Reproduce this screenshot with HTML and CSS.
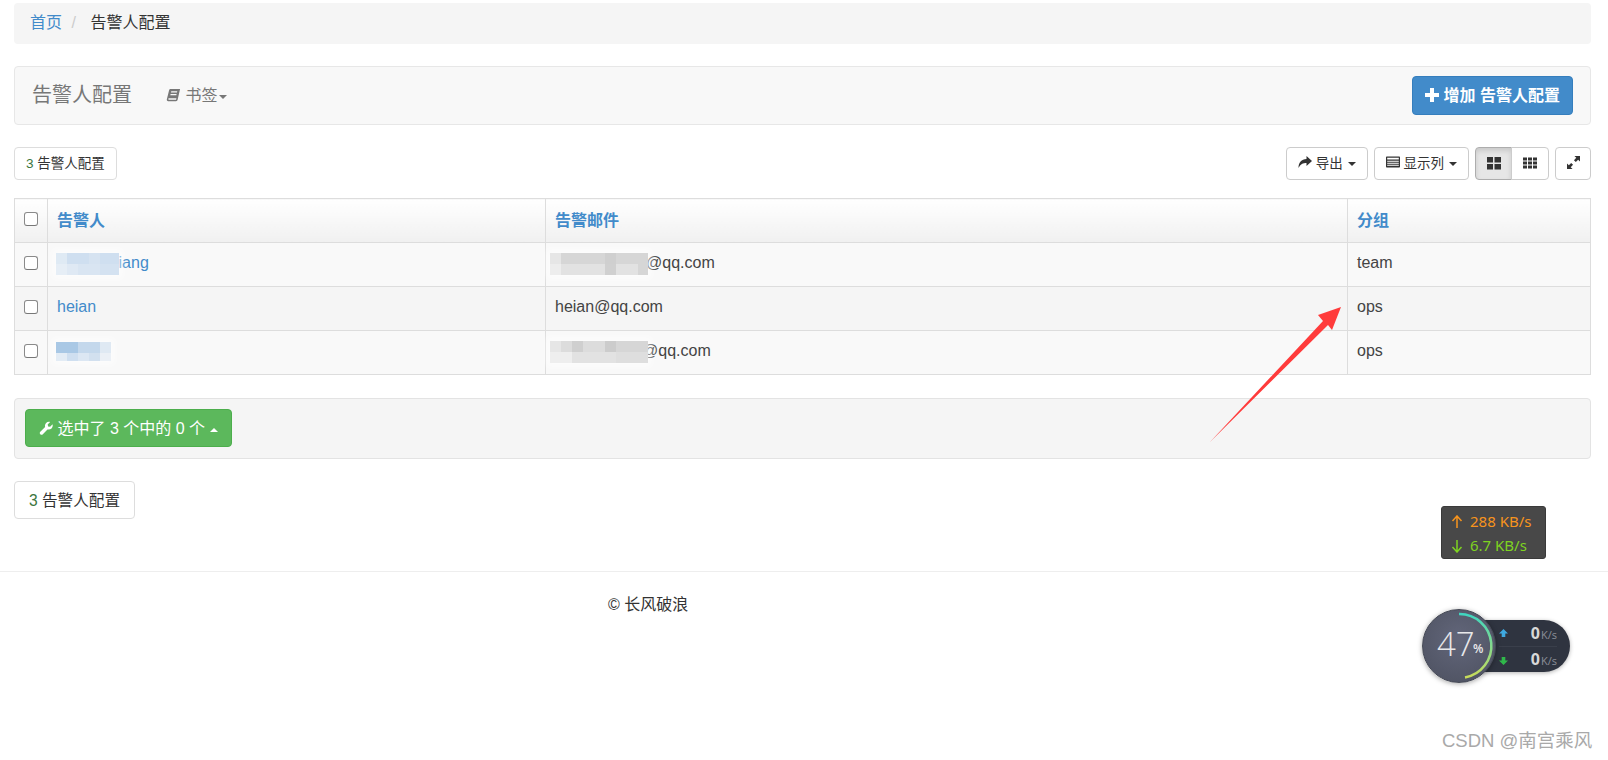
FILE: index.html
```html
<!DOCTYPE html>
<html lang="zh-CN">

<head>
    <meta charset="UTF-8">
    <title>告警人配置</title>
    <link rel="stylesheet" href="styles.css">
</head>

<body>
    <div class="page">
        <!-- Breadcrumb -->
        <div class="breadcrumb">
            <a href="#">首页</a>
            <span class="crumb-sep">/</span>
            <span>告警人配置</span>
        </div>

        <!-- Title bar -->
        <div class="navbar">
            <span class="navbar-title">告警人配置</span>
            <span class="bookmark">
                <svg class="icon icon-book" viewBox="0 0 16 16"><path d="M5 1h10l-2.600 11.500c-.2.800-.8 1.500-1.800 1.500H2.400C1.200 14 .6 13.200.9 12.100L3.300 2.300C3.500 1.500 4.100 1 5 1zm.6 2.400-.3 1.300h6.400l.3-1.300zm-.7 3-.3 1.200h6.400l.3-1.200zM3.300 11c-.6 0-1 .4-1 .8s.4.800 1 .8h7.400l.4-1.600z" /></svg>
                书签<span class="caret"></span>
            </span>
            <button type="button" class="btn-add">
                <svg class="icon icon-plus" viewBox="0 0 14 14"><path d="M5 0h4v5h5v4H9v5H5V9H0V5h5z" /></svg>
                增加 告警人配置
            </button>
        </div>

        <!-- Toolbar -->
        <div class="toolbar">
            <span class="count-box"><span class="count">3</span> 告警人配置</span>
            <div class="toolbar-right">
                <button type="button" class="tool-btn tool-export">
                    <svg class="icon" viewBox="0 0 14 14"><path d="M8.500 1 14 6 8.500 11V8C5 8 2.500 9 .5 13 .5 7.500 3.500 4 8.500 4z" /></svg>
                    导出<span class="caret caret-dark"></span>
                </button>
                <button type="button" class="tool-btn tool-columns">
                    <svg class="icon" viewBox="0 0 14 14"><path d="M1 1.500h12c.6 0 1 .4 1 1v9c0 .6-.4 1-1 1H1c-.6 0-1-.4-1-1v-9c0-.6.4-1 1-1zm.2 1.300v1.800h11.600V2.800zm0 3v1h11.600v-1zm0 2v1h11.600v-1zm0 2v1h11.600v-1z" fill-rule="evenodd" /></svg>
                    显示列<span class="caret caret-dark"></span>
                </button>
                <div class="btn-group">
                    <button type="button" class="tool-btn view-btn active">
                        <svg class="icon" viewBox="0 0 14 14"><path d="M0 1h6v5.500H0zM7.500 1H14v5.500H7.500zM0 8h6v5.500H0zM7.500 8H14v5.500H7.500z" /></svg>
                    </button>
                    <button type="button" class="tool-btn view-btn">
                        <svg class="icon" viewBox="0 0 14 14"><path d="M0 1.500h4v3H0zM5 1.500h4v3H5zM10 1.500h4v3h-4zM0 5.500h4v3H0zM5 5.500h4v3H5zM10 5.500h4v3h-4zM0 9.500h4v3H0zM5 9.500h4v3H5zM10 9.500h4v3h-4z" /></svg>
                    </button>
                </div>
                <button type="button" class="tool-btn tool-full">
                    <svg class="icon" viewBox="0 0 14 14"><path d="M8 0h6v6l-2-2-2.500 2.500L7.500 4.500 10 2zM6.500 9.500 4 12l2 2H0V8l2 2 2.500-2.500z" /></svg>
                </button>
            </div>
        </div>

        <!-- Alert contacts -->
        <table class="data-table">
            <thead>
                <tr>
                    <th class="col-check"><input type="checkbox"></th>
                    <th class="col-name"><a href="#">告警人</a></th>
                    <th class="col-mail"><a href="#">告警邮件</a></th>
                    <th><a href="#">分组</a></th>
                </tr>
            </thead>
            <tbody>
                <tr>
                    <td class="col-check"><input type="checkbox"></td>
                    <td><a href="#"><span class="mosaic mosaic-name-a"></span>liang</a></td>
                    <td><span class="mosaic mosaic-mail-a"></span>@qq.com</td>
                    <td>team</td>
                </tr>
                <tr>
                    <td class="col-check"><input type="checkbox"></td>
                    <td><a href="#">heian</a></td>
                    <td>heian@qq.com</td>
                    <td>ops</td>
                </tr>
                <tr>
                    <td class="col-check"><input type="checkbox"></td>
                    <td><a href="#"><span class="mosaic mosaic-name-b"></span></a></td>
                    <td><span class="mosaic mosaic-mail-b"></span>@qq.com</td>
                    <td>ops</td>
                </tr>
            </tbody>
        </table>

        <!-- Bulk actions -->
        <div class="bulk-bar">
            <button type="button" class="btn-bulk">
                <svg class="icon" viewBox="0 0 16 16"><path d="M15.500 3.800c.5 1.800 0 3.500-1.200 4.700-1.300 1.200-3 1.600-4.600 1.100l-5.300 5.500c-.8.800-2.100.8-2.900 0s-.8-2.100 0-2.900l5.500-5.300C6.500 5.300 6.900 3.600 8.100 2.300 9.300 1.100 11 .6 12.700 1.100L9.900 3.900l.5 2.300 2.300.5z" /></svg>
                选中了 3 个中的 0 个<span class="caret caret-up"></span>
            </button>
        </div>

        <span class="count-box count-box-large"><span class="count">3</span> 告警人配置</span>
    </div>

    <hr class="footer-line">
    <div class="footer">© 长风破浪</div>

    <!-- Things lying over the page: annotation arrow, speed widgets, watermark -->
    <svg class="arrow" viewBox="0 0 1608 760"><polygon points="1210,442 1323,321 1318,315 1341,307 1332,330 1328,325" /></svg>

    <div class="speed-box">
        <div class="speed-up">
            <svg class="speed-arrow" viewBox="0 0 12 14"><path d="M6 1v12M1.500 6 6 1l4.500 5" /></svg>288 KB/s
        </div>
        <div class="speed-down">
            <svg class="speed-arrow" viewBox="0 0 12 14"><path d="M6 13V1M1.500 8 6 13l4.500-5" /></svg>6.7 KB/s
        </div>
    </div>

    <div class="net-widget">
        <div class="net-pill">
            <div class="net-row">
                <svg class="net-icon net-up" viewBox="0 0 10 10"><path d="M5 0l5 5H7v4H3V5H0z" /></svg>
                <span class="net-val">0<small>K/s</small></span>
            </div>
            <div class="net-row">
                <svg class="net-icon net-down" viewBox="0 0 10 10"><path d="M5 10l5-5H7V1H3v4H0z" /></svg>
                <span class="net-val">0<small>K/s</small></span>
            </div>
        </div>
        <div class="net-dial">
            <svg class="net-arc" viewBox="0 0 74 74">
                <defs>
                    <linearGradient id="arc-grad" x1="0" y1="0" x2="0" y2="1">
                        <stop offset="0" stop-color="#3fd6c0" />
                        <stop offset="1" stop-color="#c8dc5a" />
                    </linearGradient>
                </defs>
                <path d="M37 5A32 32 0 0 1 43 68.500" fill="none" stroke="url(#arc-grad)" stroke-width="2.500" />
            </svg>
            <span class="net-num">47</span><span class="net-pct">%</span>
        </div>
    </div>

    <div class="watermark">CSDN @南宫乘风</div>
</body>

</html>
```

FILE: styles.css
```css
* {
    box-sizing: border-box;
}

html, body {
    height: 760px;
}

body {
    margin: 0;
    overflow: hidden;
    position: relative;
    background-color: #fff;
    color: #333;
    font-family: "Liberation Sans", "Noto Sans CJK SC", sans-serif;
    font-size: 16px;
    line-height: 23px;
}

a {
    color: #428bca;
    text-decoration: none;
}

.page {
    padding: 3px 17px 0 14px;
}

.icon {
    width: 14px;
    height: 14px;
    fill: currentColor;
    vertical-align: -1px;
}

.caret {
    display: inline-block;
    width: 0;
    height: 0;
    margin-left: 2px;
    vertical-align: 2px;
    border-top: 4px solid #777;
    border-left: 4px solid transparent;
    border-right: 4px solid transparent;
}

.caret-dark {
    margin-left: 5px;
    border-top-color: #333;
}

.caret-up {
    margin-left: 5px;
    border-top: 0;
    border-bottom: 4px solid #fff;
}

/* breadcrumb */
.breadcrumb {
    height: 41px;
    margin-bottom: 22px;
    padding: 8px 16px 0;
    background-color: #f5f5f5;
    border-radius: 4px;
}

.crumb-sep {
    margin: 0 10px 0 5px;
    color: #ccc;
}

/* title bar */
.navbar {
    display: flex;
    align-items: center;
    height: 59px;
    margin-bottom: 22px;
    padding: 0 17px;
    background-color: #f8f8f8;
    border: 1px solid #e7e7e7;
    border-radius: 4px;
}

.navbar-title {
    color: #777;
    font-size: 20px;
}

.bookmark {
    margin-left: 34px;
    color: #777;
}

.icon-book {
    width: 15px;
    height: 15px;
    vertical-align: -2px;
}

.btn-add {
    margin-left: auto;
    height: 39px;
    padding: 0 12px;
    color: #fff;
    background-color: #428bca;
    border: 1px solid #357ebd;
    border-radius: 4px;
    font: inherit;
    font-weight: 600;
}

.icon-plus {
    vertical-align: -1px;
}

/* toolbar */
.toolbar {
    display: flex;
    justify-content: space-between;
    height: 33px;
    margin-bottom: 18px;
}

.count-box {
    display: inline-block;
    height: 33px;
    padding: 0 11px;
    font-size: 13.500px;
    line-height: 31px;
    background-color: #fff;
    border: 1px solid #ddd;
    border-radius: 4px;
}

.count {
    color: #3c763d;
}

.count-box-large {
    height: 38px;
    padding: 0 14px;
    font-size: 15.600px;
    line-height: 37px;
}

.toolbar-right {
    display: flex;
    gap: 6px;
}

.tool-btn {
    height: 33px;
    padding: 0 0 3px;
    color: #333;
    background-color: #fff;
    border: 1px solid #ccc;
    border-radius: 4px;
    font-family: inherit;
    font-size: 13.500px;
}

.tool-export {
    width: 82px;
}

.tool-columns {
    width: 95px;
}

.tool-full {
    width: 36px;
    padding: 0;
}

.tool-full .icon {
    width: 13px;
    height: 13px;
}

.btn-group {
    display: flex;
}

.view-btn {
    width: 37px;
    padding: 0;
}

.view-btn:first-child {
    border-radius: 4px 0 0 4px;
}

.view-btn:last-child {
    margin-left: -1px;
    width: 38px;
    border-radius: 0 4px 4px 0;
}

.view-btn.active {
    background-color: #e6e6e6;
    border-color: #adadad;
    box-shadow: inset 0 3px 5px rgba(0, 0, 0, 0.125);
}

/* table */
.data-table {
    width: 100%;
    table-layout: fixed;
    border-collapse: collapse;
    margin-bottom: 23px;
    border: 1px solid #ddd;
    color: #444;
}

.data-table th,
.data-table td {
    height: 44px;
    padding: 8px 9px 12px;
    text-align: left;
    border: 1px solid #ddd;
    white-space: nowrap;
}

.data-table th {
    padding: 10px 9px;
    background: linear-gradient(to bottom, #fff, #f0f0f0);
}

.col-check {
    width: 33px;
}

.col-name {
    width: 498px;
}

.col-mail {
    width: 802px;
}

.data-table .col-check {
    padding: 0;
    text-align: center;
}

.data-table input {
    appearance: none;
    display: block;
    width: 14px;
    height: 14px;
    margin: 0 0 4px 9px;
    background-color: #fff;
    border: 1px solid #8a8a8a;
    border-bottom-color: #777;
    border-radius: 3px;
}

.data-table tbody tr {
    background-color: #f9f9f9;
}

.data-table tbody tr:nth-child(2) {
    background-color: #f5f5f5;
}

/* pixelated patches hiding the names */
.mosaic {
    display: inline-block;
    position: relative;
    height: 22px;
    margin-top: -4px;
    margin-bottom: -4px;
    vertical-align: middle;
    box-shadow: 0 0 7px 4px rgba(255, 255, 255, 0.55);
}

.mosaic-name-a {
    width: 63px;
    margin-left: -1px;
    margin-right: -4px;
    background:
        linear-gradient(to right, #dfeaf4 0 11px, #cfdff0 11px 33px, #d6e3f1 33px 44px, #cfdff0 44px) top / 100% 11px no-repeat,
        linear-gradient(to right, #e6eef6 0 11px, #dfe9f4 11px 22px, #d9e5f2 22px 44px, #d4e2f1 44px) bottom / 100% 11px no-repeat;
}

.mosaic-name-b {
    width: 55px;
    height: 19px;
    margin-left: -1px;
    background:
        linear-gradient(to right, #a9c8e5 0 22px, #c4d8ec 22px 44px, #dfe9f3 44px) top / 100% 11px no-repeat,
        linear-gradient(to right, #e3ecf5 0 11px, #cfdff0 11px 22px, #dce7f3 22px 33px, #d2e0ef 33px 44px, #ebf0f6 44px) bottom / 100% 8px no-repeat;
}

.mosaic-mail-a {
    width: 98px;
    margin-left: -5px;
    margin-right: -2px;
    background:
        linear-gradient(to right, #e6e6e6 0 11px, #d6d6d6 11px 55px, #cfcfcf 55px 66px, #d6d6d6 66px) top / 100% 11px no-repeat,
        linear-gradient(to right, #ededed 0 11px, #e2e2e2 11px 55px, #d0d0d0 55px 66px, #e2e2e2 66px 88px, #d6d6d6 88px) bottom / 100% 11px no-repeat;
}

.mosaic-mail-b {
    width: 98px;
    margin-left: -5px;
    margin-right: -6px;
    background:
        linear-gradient(to right, #e6e6e6 0 11px, #dcdcdc 11px 22px, #cfcfcf 22px 33px, #dcdcdc 33px 55px, #cccccc 55px 66px, #d6d6d6 66px) top / 100% 11px no-repeat,
        linear-gradient(to right, #eeeeee 0 22px, #e2e2e2 22px 66px, #dedede 66px) bottom / 100% 11px no-repeat;
}

/* bulk bar */
.bulk-bar {
    height: 61px;
    margin-bottom: 22px;
    padding: 10px;
    background-color: #f5f5f5;
    border: 1px solid #e3e3e3;
    border-radius: 4px;
}

.btn-bulk {
    height: 38px;
    width: 207px;
    padding: 0;
    color: #fff;
    background-color: #5cb85c;
    border: 1px solid #4cae4c;
    border-radius: 4px;
    font: inherit;
}

/* footer */
.footer-line {
    margin: 52px 0 0;
    border: 0;
    border-top: 1px solid #eee;
}

.footer {
    padding: 21px 0 0 608px;
}

/* overlays */
.arrow {
    position: absolute;
    top: 0;
    left: 0;
    width: 1608px;
    height: 760px;
    fill: #ff3b3b;
    pointer-events: none;
}

.speed-box {
    position: absolute;
    left: 1441px;
    top: 506px;
    width: 105px;
    height: 53px;
    padding: 2px 0 0 9px;
    background-color: #484848;
    border: 1px solid #3a3a3a;
    border-radius: 3px;
    font-family: "Noto Sans", sans-serif;
    font-size: 15px;
    line-height: 24px;
    white-space: nowrap;
}

.speed-arrow {
    width: 12px;
    height: 14px;
    margin-right: 7px;
    vertical-align: -2px;
    fill: none;
    stroke: currentColor;
    stroke-width: 1.500;
}

.speed-up {
    color: #f7941d;
}

.speed-down {
    color: #7ed321;
}

.net-widget {
    position: absolute;
    left: 1422px;
    top: 609px;
    width: 148px;
    height: 74px;
    font-family: "Open Sans", sans-serif;
}

.net-pill {
    position: absolute;
    left: 40px;
    top: 11px;
    width: 108px;
    height: 52px;
    padding: 1px 13px 0 37px;
    background-color: #2f3440;
    border-radius: 0 26px 26px 0;
    box-shadow: 0 1px 4px rgba(0, 0, 0, 0.3);
}

.net-row {
    display: flex;
    justify-content: space-between;
    align-items: center;
    height: 26px;
    font-weight: 700;
}

.net-row:first-child {
    border-bottom: 1px solid #3a3f4b;
}

.net-icon {
    width: 9px;
    height: 9px;
    fill: currentColor;
}

.net-up {
    color: #3fa9e0;
}

.net-down {
    color: #2fb84a;
}

.net-val {
    color: #d8d8d8;
    font-size: 16px;
    line-height: 20px;
}

.net-val small {
    margin-left: 1px;
    color: #8b8f98;
    font-size: 11px;
    font-weight: 400;
}

.net-dial {
    position: absolute;
    left: 0;
    top: 0;
    width: 74px;
    height: 74px;
    color: #e8e8ea;
    background: radial-gradient(circle at 50% 40%, #62667a, #4c505f);
    border: 1px solid #454955;
    border-radius: 50%;
    box-shadow: 0 1px 5px rgba(0, 0, 0, 0.35);
}

.net-arc {
    position: absolute;
    left: -1px;
    top: -1px;
    width: 74px;
    height: 74px;
}

.net-num {
    position: absolute;
    left: 14px;
    top: 14px;
    font-size: 33px;
    font-weight: 300;
    line-height: 40px;
}

.net-pct {
    position: absolute;
    left: 50px;
    top: 31px;
    font-size: 12px;
    font-weight: 600;
    line-height: 16px;
}

.watermark {
    position: absolute;
    left: 1442px;
    top: 729px;
    color: #a9a9a9;
    font-size: 18.500px;
    line-height: 24px;
    white-space: nowrap;
}
```
